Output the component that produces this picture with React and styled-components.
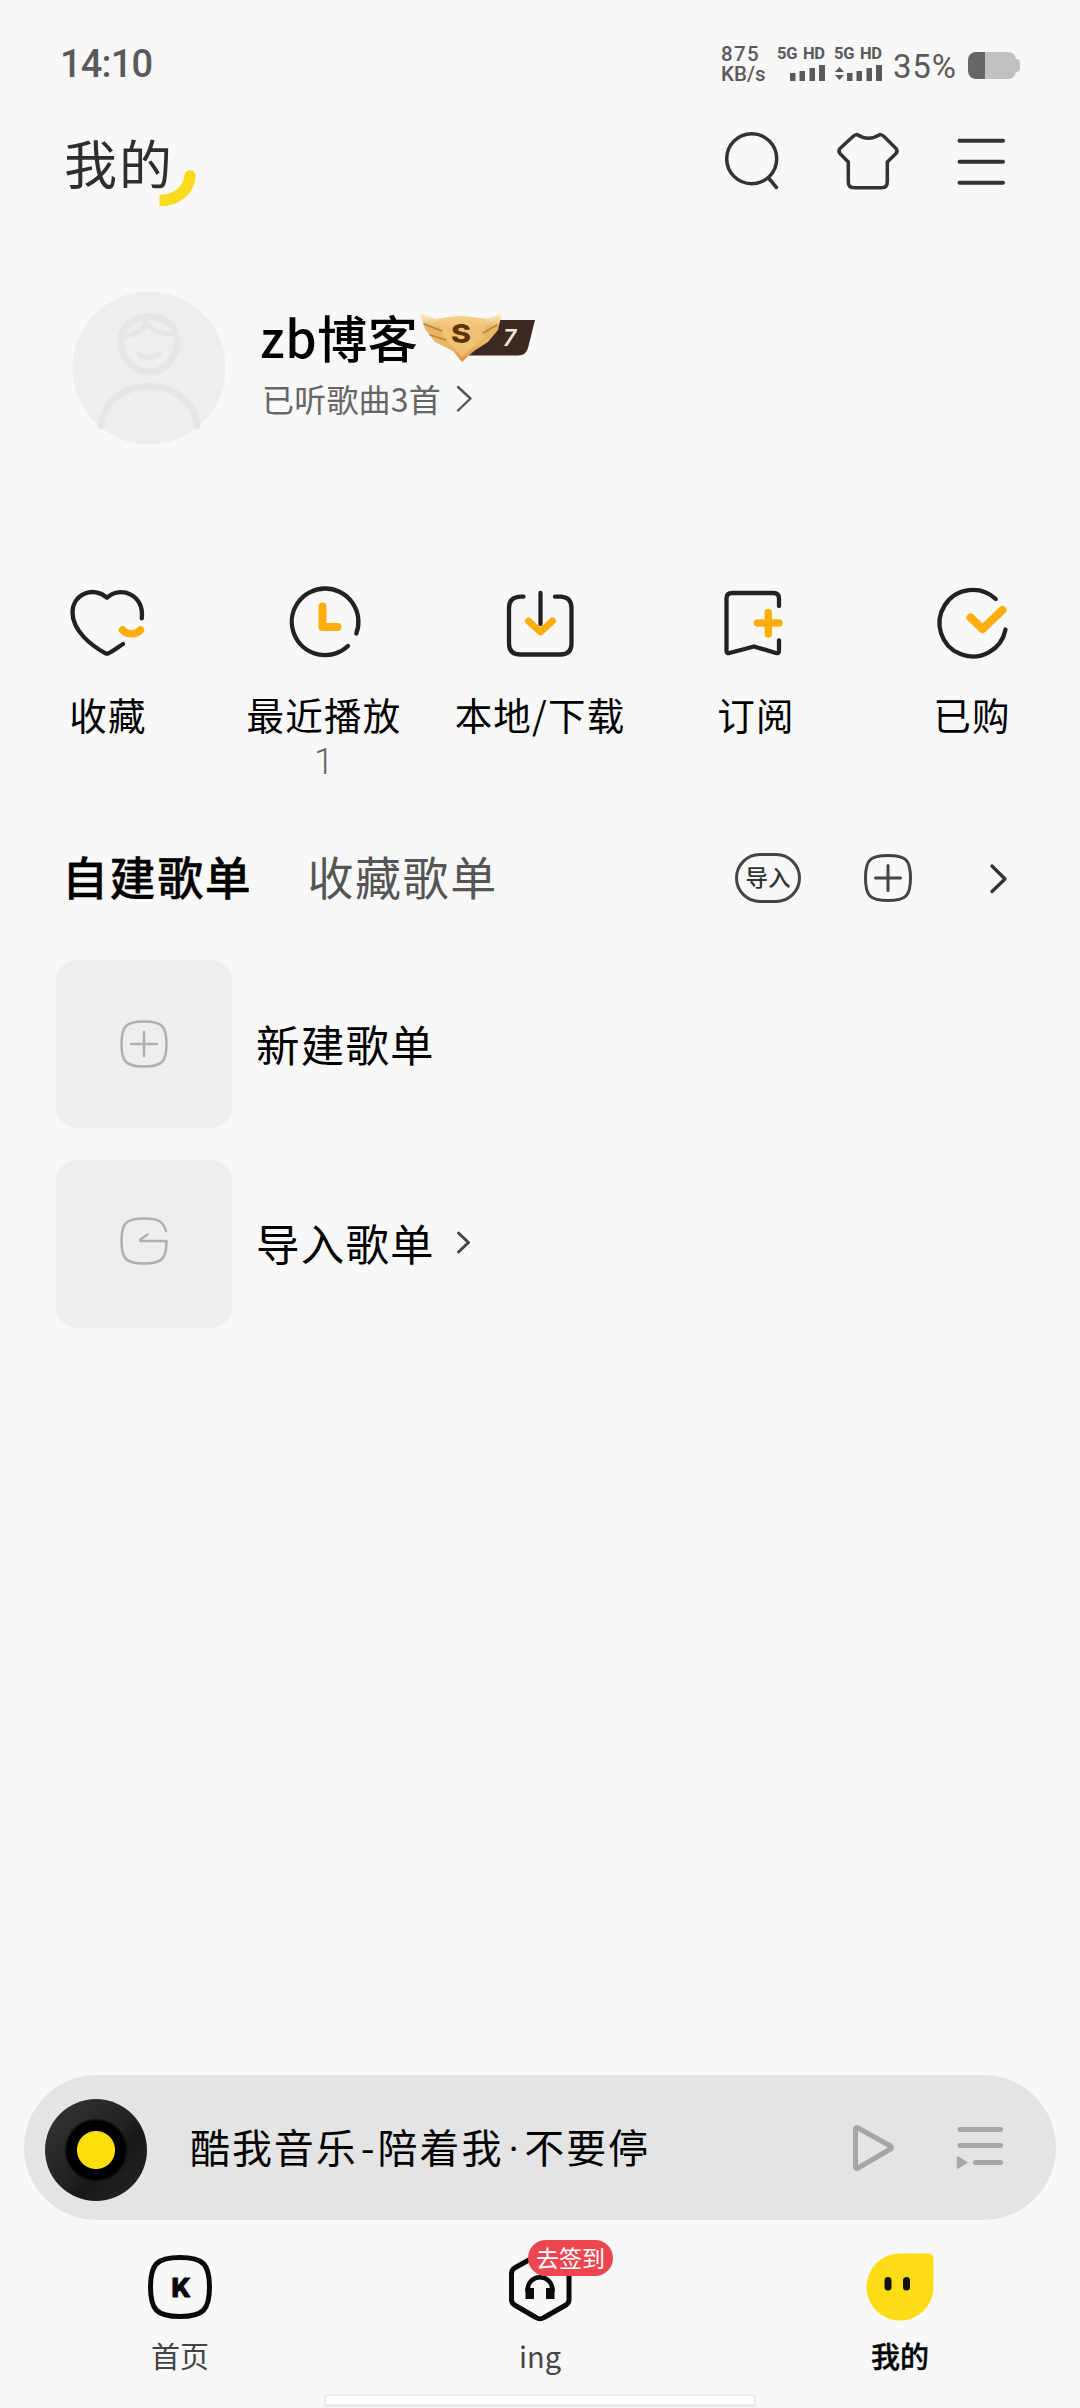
import React from "react";
import styled, { createGlobalStyle } from "styled-components";

const cjk = `"Noto Sans CJK SC", sans-serif`;

const GlobalStyle = createGlobalStyle`
  * { box-sizing: border-box; }
  body { margin: 0; background: #f8f8f8; font-family: ${cjk}; }
`;

const Screen = styled.main`
  width: 1080px;
  height: 2408px;
  display: flex;
  flex-direction: column;
  overflow: hidden;
  background: #f8f8f8;
  color: #000;
`;

const Svg = styled.svg`
  display: block;
  flex: none;
  fill: none;
  stroke-linecap: round;
  stroke-linejoin: round;
  overflow: visible;
`;

/* Icons share the screen's coordinate space through their viewBox. */
const Icon = ({ box, children, ...rest }) => (
  <Svg width={box[2]} height={box[3]} viewBox={box.join(" ")} {...rest}>
    {children}
  </Svg>
);

const Label = styled.span`
  display: block;
  white-space: nowrap;
  font-size: ${(p) => p.$size}px;
  line-height: ${(p) => p.$line || p.$size}px;
  letter-spacing: ${(p) => p.$spacing || 0}px;
  font-weight: ${(p) => p.$weight || 400};
  color: ${(p) => p.$color || "#000"};
  -webkit-text-stroke: ${(p) => p.$stroke || 0}px ${(p) => p.$color || "#000"};
`;

/* Status bar */
const StatusBar = styled.header`
  height: 112px;
  padding: 42px 60px 0 60px;
  display: flex;
  align-items: flex-start;
  justify-content: space-between;
  font-family: Roboto, sans-serif;
  color: #5a5a5a;
`;
const Clock = styled.time`
  font-size: 38px;
  line-height: 44px;
  font-weight: 500;
  letter-spacing: -0.8px;
`;
const StatusRight = styled.div`
  display: flex;
  align-items: flex-start;
`;
const NetSpeed = styled.div`
  width: 56px;
  padding-top: 2px;
  display: flex;
  flex-direction: column;
  font-size: 20.5px;
  font-weight: 500;
  line-height: 20px;
`;
const SpeedValue = styled.span`
  letter-spacing: 1.4px;
`;
const Signal = styled.div`
  width: ${(p) => p.$width}px;
  padding-top: 3px;
  display: flex;
  flex-direction: column;
  gap: 2px;
  font-size: 16.5px;
  line-height: 18px;
  font-weight: 700;
  letter-spacing: -0.3px;
  word-spacing: 2px;
  white-space: nowrap;
`;
const BatteryText = styled.span`
  width: 75px;
  font-size: 33px;
  line-height: 50px;
  letter-spacing: 0.8px;
`;
const Battery = styled.div`
  display: flex;
  align-items: center;
  padding-top: 10px;
`;
const BatteryBody = styled.div`
  width: 48px;
  height: 27px;
  border-radius: 8px;
  background: linear-gradient(90deg, #666 0 17px, #c1c1c1 17px);
`;
const BatteryTip = styled.div`
  width: 4px;
  height: 13px;
  border-radius: 0 4px 4px 0;
  background: #c1c1c1;
`;

/* Page header */
const PageHeader = styled.div`
  height: 117px;
  padding: 0 70px 0 64px;
  display: flex;
  justify-content: space-between;
`;
const TitleGroup = styled.h1`
  margin: 0;
  padding-top: 20px;
  display: flex;
  font-weight: 400;
`;
const TitleArc = styled(Icon)`
  margin: 34px 0 0 -14px;
`;
const HeaderActions = styled.div`
  display: flex;
  padding-top: 16px;
  gap: 50px;
`;

/* Profile */
const Profile = styled.section`
  height: 352px;
  padding: 62px 0 0 73px;
  display: flex;
`;
const ProfileText = styled.div`
  padding: 18px 0 0 34px;
`;
const NameRow = styled.div`
  display: flex;
  height: 64px;
`;
const BadgeIcon = styled(Icon)`
  margin: 0;
`;
const Listened = styled.div`
  display: flex;
  align-items: center;
  height: 50px;
  gap: 14px;
  padding-left: 2px;
`;

/* Shortcuts */
const Shortcuts = styled.nav`
  height: 241px;
  display: grid;
  grid-template-columns: repeat(5, 1fr);
`;
const Shortcut = styled.a`
  display: flex;
  flex-direction: column;
  align-items: center;
`;
const ShortcutIcon = styled.div`
  height: 106px;
`;
const Count = styled.span`
  margin-top: 1px;
  font-family: Roboto, sans-serif;
  font-size: 36px;
  font-weight: 300;
  line-height: 40px;
  color: #666;
`;

/* Playlist tabs */
const TabsBar = styled.div`
  height: 138px;
  padding: 0 70px 0 62px;
  display: flex;
  justify-content: space-between;
`;
const Tabs = styled.div`
  display: flex;
  gap: 55px;
  padding-top: 19px;
`;
const TabActions = styled.div`
  display: flex;
  align-items: center;
  height: 111px;
`;
const ImportPill = styled.button`
  width: 66px;
  height: 50px;
  padding: 0 0 3px;
  margin-right: 63px;
  border: 3px solid #444;
  border-radius: 25px;
  background: none;
  font: 500 22.5px/38px ${cjk};
  color: #333;
  white-space: nowrap;
  display: flex;
  align-items: center;
  justify-content: center;
`;

/* Playlist rows */
const Playlists = styled.section`
  height: 1115px;
  padding-left: 56px;
  display: flex;
  flex-direction: column;
  gap: 32px;
`;
const PlaylistRow = styled.div`
  height: 168px;
  display: flex;
  align-items: center;
`;
const Tile = styled.div`
  width: 176px;
  height: 168px;
  margin-right: 24px;
  border-radius: 22px;
  background: #eeeeee;
  display: flex;
  align-items: center;
  justify-content: center;
`;
const RowTitle = styled(Label)`
  padding-bottom: ${(p) => p.$lift || 0}px;
`;
const RowChevron = styled(Icon)`
  margin: 0 0 3px 21px;
`;

/* Player */
const Player = styled.section`
  height: 145px;
  margin: 0 24px;
  padding: 1px 52px 0 21px;
  border-radius: 73px;
  background: #e4e4e4;
  display: flex;
  align-items: center;
`;
const Disc = styled.div`
  width: 102px;
  height: 102px;
  margin: 3px 43px 0 0;
  border-radius: 50%;
  background: radial-gradient(circle, #ffde0c 0 18.5px, #000 19.5px 29px, transparent 32px),
    linear-gradient(135deg, #363636, #222 50%, #181818 62%, #262626);
`;
const Mark = styled.span`
  display: inline-block;
  width: ${(p) => p.$width}px;
  font-family: ${(p) => p.$font || "inherit"};
  letter-spacing: 0;
  text-align: center;
`;
const PlayerActions = styled.div`
  margin-left: auto;
  display: flex;
  gap: 62px;
`;

/* Bottom navigation */
const BottomNav = styled.nav`
  height: 174px;
  display: grid;
  grid-template-columns: repeat(3, 1fr);
`;
const NavItem = styled.a`
  display: flex;
  flex-direction: column;
  align-items: center;
  padding-top: 27px;
`;
const NavIcon = styled.div`
  position: relative;
  height: 88px;
`;
const CheckIn = styled.span`
  position: absolute;
  left: 22px;
  top: -7px;
  width: 85px;
  height: 36px;
  border-radius: 18px;
  background: #ee4650;
  color: #fff;
  font-size: 23px;
  line-height: 34px;
  text-align: center;
  white-space: nowrap;
`;
const HomeIndicator = styled.div`
  width: 432px;
  height: 13px;
  margin: 0 auto;
  border: 2px solid #ececec;
  border-bottom: 3px solid #eeeeee;
  border-radius: 4px 4px 0 0;
  background: #fff;
`;

const ink = "#222";
const gold = "#ffad0d";

const shortcuts = [
  {
    name: "收藏",
    art: (
      <>
        <path d="M124 643 C118 647 113 651 109 652.5 Q108 653 106.500 652.300 C93 645 73.500 630 73.500 611.500 C73.500 593 95 584.500 108 596.800 C121 584.500 145.500 593 142.800 617.300" stroke={ink} strokeWidth="4.300" />
        <path d="M123.500 629 C128 634 137 634 141.500 629" stroke={gold} strokeWidth="7.500" />
      </>
    ),
  },
  {
    name: "最近播放",
    count: "1",
    art: (
      <>
        <path d="M357.300 632.500 A33.300 33.300 0 1 0 349 645" stroke={ink} strokeWidth="4.300" />
        <path d="M323.500 605.500 V626 H338.500" stroke={gold} strokeWidth="8" />
      </>
    ),
  },
  {
    name: "本地/下载",
    art: (
      <>
        <path d="M524.500 595.700 H521 Q510 596.500 510 607 V642.500 Q510 653.500 521 653.500 H561.500 Q572.500 653.500 572.500 642.500 V607 Q572.500 596.500 562 595.700 H556" stroke={ink} strokeWidth="4.300" />
        <path d="M529.500 620 L541.500 631 L553.500 620" stroke={gold} strokeWidth="7" />
        <path d="M541.500 592 V623" stroke={ink} strokeWidth="4.300" />
      </>
    ),
  },
  {
    name: "订阅",
    art: (
      <>
        <path d="M780 605 V597.500 Q780 592 774.500 592 H733 Q727.500 592 727.500 597.500 V650 Q727.500 652.800 730.500 652 L755 645.500 L777 652 Q780 652.800 780 650 V639.500" stroke={ink} strokeWidth="4.300" />
        <path d="M758.500 622 H780 M769.300 611.500 V633" stroke={gold} strokeWidth="7.500" />
      </>
    ),
  },
  {
    name: "已购",
    art: (
      <>
        <path d="M996.700 598 A33.300 33.300 0 1 0 1006.500 628.500" stroke={ink} strokeWidth="4.300" />
        <path d="M971.500 616.500 L983.500 628 L1003.500 609" stroke={gold} strokeWidth="8" />
      </>
    ),
  },
];

const Bars = ({ x }) => (
  <g fill="#5a5a5a">
    <rect x={x} y="72" width="5.500" height="8" />
    <rect x={x + 9.5} y="70" width="5.500" height="10" />
    <rect x={x + 19.5} y="67" width="5.500" height="13" />
    <rect x={x + 29} y="64" width="6" height="16" />
  </g>
);

export default function App() {
  return (
    <>
      <GlobalStyle />
      <Screen>
        <StatusBar>
          <Clock>14:10</Clock>
          <StatusRight>
            <NetSpeed>
              <SpeedValue>875</SpeedValue>
              <span>KB/s</span>
            </NetSpeed>
            <Signal $width={57}>
              5G HD
              <Icon box={[776, 64, 48, 16]}>
                <Bars x={789} />
              </Icon>
            </Signal>
            <Signal $width={59}>
              5G HD
              <Icon box={[833, 64, 48, 16]}>
                <path d="M834 71 L838.500 66 L843 71 Z M834 74 L838.500 79 L843 74 Z" fill="#5a5a5a" />
                <Bars x={846} />
              </Icon>
            </Signal>
            <BatteryText>35%</BatteryText>
            <Battery>
              <BatteryBody />
              <BatteryTip />
            </Battery>
          </StatusRight>
        </StatusBar>

        <PageHeader>
          <TitleGroup>
            <Label $size={53} $line={60} $spacing={2} $color="#2e2e2e">我的</Label>
            <TitleArc box={[160, 166, 38, 42]}>
              <path d="M190 176 C189 191 175 201 159 200.500" stroke="#fadb1e" strokeWidth="11.500" />
              <path d="M149 190 H159.500 V212 H149 Z" fill="#f8f8f8" />
            </TitleArc>
          </TitleGroup>
          <HeaderActions>
            <Icon box={[720, 128, 64, 68]} stroke="#333" strokeWidth="3.500">
              <circle cx="751.700" cy="158.700" r="25" />
              <path d="M768.500 178 L776.500 187.500" />
            </Icon>
            <Icon box={[834, 128, 70, 68]} stroke="#333" strokeWidth="3.500">
              <path d="M857 134.500 Q868.500 142 880 134.500 Q882 134.500 884 136.500 L896 148.500 Q898 151 896 153.500 L887.300 162 V182 Q887.300 187.700 881.500 187.700 H854 Q848.300 187.700 848.300 182 V162 L840 153.500 Q838 151 840 148.500 L853 136.500 Q855 134.500 857 134.500 Z" />
            </Icon>
            <Icon box={[954, 128, 56, 68]} stroke="#333" strokeWidth="4">
              <path d="M959.500 140.700 H1003 M959.500 161.700 H1003 M959.500 182.700 H1003" />
            </Icon>
          </HeaderActions>
        </PageHeader>

        <Profile>
          <Icon box={[73, 291, 153, 154]}>
            <circle cx="149" cy="368" r="76.500" fill="#eeeeee" />
            <g stroke="#e6e6e6" strokeWidth="7">
              <path d="M121 341 C119 309 179 309 177 341 C177 382 121 382 121 341 Z" />
              <path d="M125 336 Q142 333 146 323 Q156 335 174 334" strokeWidth="5" />
              <path d="M139 354 Q149 361 159 354" strokeWidth="5" />
              <path d="M101 426 C106 373 192 373 197 426" />
            </g>
          </Icon>
          <ProfileText>
            <NameRow>
              <Label $size={50} $line={54} $spacing={0.6} $weight={500}>zb博客</Label>
              <BadgeIcon box={[420, 309, 118, 55]}>
                <defs>
                  <linearGradient id="wing" x1="0" y1="0" x2="0" y2="1">
                    <stop offset="0" stopColor="#fff3cf" />
                    <stop offset="0.300" stopColor="#e6b464" />
                    <stop offset="0.650" stopColor="#e9b765" />
                    <stop offset="1" stopColor="#d6953f" />
                  </linearGradient>
                </defs>
                <path d="M466 320 H537 L530 348 Q528 355.500 520 355.500 H462 Z" fill="#3a2a22" />
                <path d="M422 313 L438 319 L463 315 L488 319 L504 313 L500 330 L490 342 L476 351 L464 362 L455 351 L437 342 L427 329 Z" fill="url(#wing)" />
                <path d="M438 319 L463 316 L488 319 L486 337 L464 357 L446 337 Z" fill="#f3c77c" opacity="0.700" />
                <path d="M426 324 L444 331 M432 335 L448 340 M499 325 L485 333" stroke="#bd8435" strokeWidth="1.500" />
                <text x="453" y="342.500" fontFamily="Inter, sans-serif" fontSize="26" fontWeight="800" fill="#5f3508" textLength="20" lengthAdjust="spacingAndGlyphs">S</text>
                <text x="505" y="346" fontFamily="Inter, sans-serif" fontSize="23" fontWeight="600" fontStyle="italic" fill="#f5e6dc">7</text>
              </BadgeIcon>
            </NameRow>
            <Listened>
              <Label $size={32} $line={46} $spacing={0.2} $color="#666">已听歌曲3首</Label>
              <Icon box={[456, 385, 18, 29]} stroke="#555" strokeWidth="2.400">
                <path d="M459 388 L471.500 399.500 L459 411.500" />
              </Icon>
            </Listened>
          </ProfileText>
        </Profile>

        <Shortcuts>
          {shortcuts.map((s, i) => (
            <Shortcut key={s.name}>
              <ShortcutIcon>
                <Icon box={[73 + i * 216, 580, 72, 80]}>{s.art}</Icon>
              </ShortcutIcon>
              <Label $size={37.5} $line={54} $spacing={1.2}>{s.name}</Label>
              {s.count && <Count>{s.count}</Count>}
            </Shortcut>
          ))}
        </Shortcuts>

        <TabsBar>
          <Tabs>
            <Label $size={46} $line={68} $spacing={1.6} $weight={500} $stroke={0.3}>自建歌单</Label>
            <Label $size={46} $line={68} $spacing={1.6} $color="#555">收藏歌单</Label>
          </Tabs>
          <TabActions>
            <ImportPill>导入</ImportPill>
            <Icon box={[864, 854, 48, 48]} stroke="#444" strokeWidth="3">
              <path d="M888 855.500 C906 855.500 910.500 860 910.500 878 C910.500 896 906 900.500 888 900.500 C870 900.500 865.500 896 865.500 878 C865.500 860 870 855.500 888 855.500 Z M875.500 878 H900.500 M888 865.500 V890.500" />
            </Icon>
            <Icon box={[912, 860, 98, 36]} stroke="#333" strokeWidth="3.300">
              <path d="M992 866 L1005 879 L992 891.500" />
            </Icon>
          </TabActions>
        </TabsBar>

        <Playlists>
          <PlaylistRow>
            <Tile>
              <Icon box={[120, 1020, 48, 48]} stroke="#b0b0b0" strokeWidth="2.500">
                <path d="M144 1021.500 C162 1021.500 166.500 1026 166.500 1044 C166.500 1062 162 1066.500 144 1066.500 C126 1066.500 121.500 1062 121.500 1044 C121.500 1026 126 1021.500 144 1021.500 Z M131 1044 H157 M144 1032 V1056" />
              </Icon>
            </Tile>
            <RowTitle $size={43.5} $line={60} $spacing={1.2}>新建歌单</RowTitle>
          </PlaylistRow>
          <PlaylistRow>
            <Tile>
              <Icon box={[120, 1217, 48, 54]} stroke="#b0b0b0" strokeWidth="2.500">
                <path d="M166 1231 C163 1221 158 1218.500 144 1218.500 C126 1218.500 121.500 1223 121.500 1241 C121.500 1259 126 1263.500 144 1263.500 C162 1263.500 166.500 1259 166.500 1241 H141 Q139.500 1241 140.500 1239.500 L147.500 1234.500" />
              </Icon>
            </Tile>
            <RowTitle $size={43.5} $line={60} $spacing={1.2} $lift={3}>导入歌单</RowTitle>
            <RowChevron box={[456, 1230, 15, 25]} stroke="#444" strokeWidth="3">
              <path d="M458.500 1233 L468.500 1242.500 L458.500 1252" />
            </RowChevron>
          </PlaylistRow>
        </Playlists>

        <Player>
          <Disc />
          <Label $size={40} $line={58} $spacing={1.9}>
            酷我音乐<Mark $width={20}>-</Mark>陪着我<Mark $width={21} $font="Roboto, sans-serif">·</Mark>不要停
          </Label>
          <PlayerActions>
            <Icon box={[855, 2124, 42, 50]} stroke="#a6a6a6" strokeWidth="5">
              <path d="M858.500 2130.500 Q858.500 2127.500 861 2129 L893.500 2147 Q895.500 2148.500 893.500 2150 L861 2169 Q858.500 2170.500 858.500 2167.500 Z" />
            </Icon>
            <Icon box={[957, 2124, 48, 50]} stroke="#a6a6a6" strokeWidth="5">
              <path d="M961 2130.500 H1001.500 M961 2146.500 H1001.500 M976.500 2163.500 H1001.500" />
              <path d="M958.500 2158 L967.500 2163.500 L958.500 2169 Z" fill="#a6a6a6" strokeWidth="1.500" />
            </Icon>
          </PlayerActions>
        </Player>

        <BottomNav>
          <NavItem>
            <NavIcon>
              <Icon box={[146, 2248, 68, 80]}>
                <path d="M180 2258.500 C203 2258.500 209.500 2265 209.500 2288 C209.500 2311 203 2317.500 180 2317.500 C157 2317.500 150.500 2311 150.500 2288 C150.500 2265 157 2258.500 180 2258.500 Z" stroke="#0a0a0a" strokeWidth="5" />
                <text x="181" y="2297.500" textAnchor="middle" fontFamily="Inter, sans-serif" fontSize="26" fontWeight="800" fill="#0a0a0a" stroke="#0a0a0a" strokeWidth="1">K</text>
              </Icon>
            </NavIcon>
            <Label $size={29} $line={40} $color="#444">首页</Label>
          </NavItem>
          <NavItem>
            <NavIcon>
              <Icon box={[506, 2248, 68, 80]}>
                <path d="M536 2257 L514.500 2269 Q511.500 2271 511.500 2274.500 V2300.500 Q511.500 2304 514.500 2306 L536 2318.500 Q540 2321 544 2318.500 L566 2306 Q569 2304 569 2300.500 V2274.500 Q569 2271 566 2269 L544 2257 Q540 2255 536 2257 Z" stroke="#0a0a0a" strokeWidth="5" />
                <path d="M527.500 2292 C527.500 2273.500 552.500 2273.500 552.500 2292" stroke="#0a0a0a" strokeWidth="4.500" />
                <path d="M525.500 2289 H534 V2300 H525.500 Z M546 2289 H554.500 V2300 H546 Z" fill="#0a0a0a" />
              </Icon>
              <CheckIn>去签到</CheckIn>
            </NavIcon>
            <Label $size={29} $line={40} $color="#444">ing</Label>
          </NavItem>
          <NavItem>
            <NavIcon>
              <Icon box={[866, 2248, 68, 80]}>
                <path d="M900 2254.500 H928 Q933.500 2254.500 933.500 2260 V2288 A33.500 33.500 0 1 1 900 2254.500 Z" fill="#fcdc14" />
                <path d="M888 2281.500 V2288 M906.500 2281.500 V2288" stroke="#111" strokeWidth="7" />
              </Icon>
            </NavIcon>
            <Label $size={29} $line={40} $weight={500} $stroke={0.4}>我的</Label>
          </NavItem>
        </BottomNav>
        <HomeIndicator />
      </Screen>
    </>
  );
}
